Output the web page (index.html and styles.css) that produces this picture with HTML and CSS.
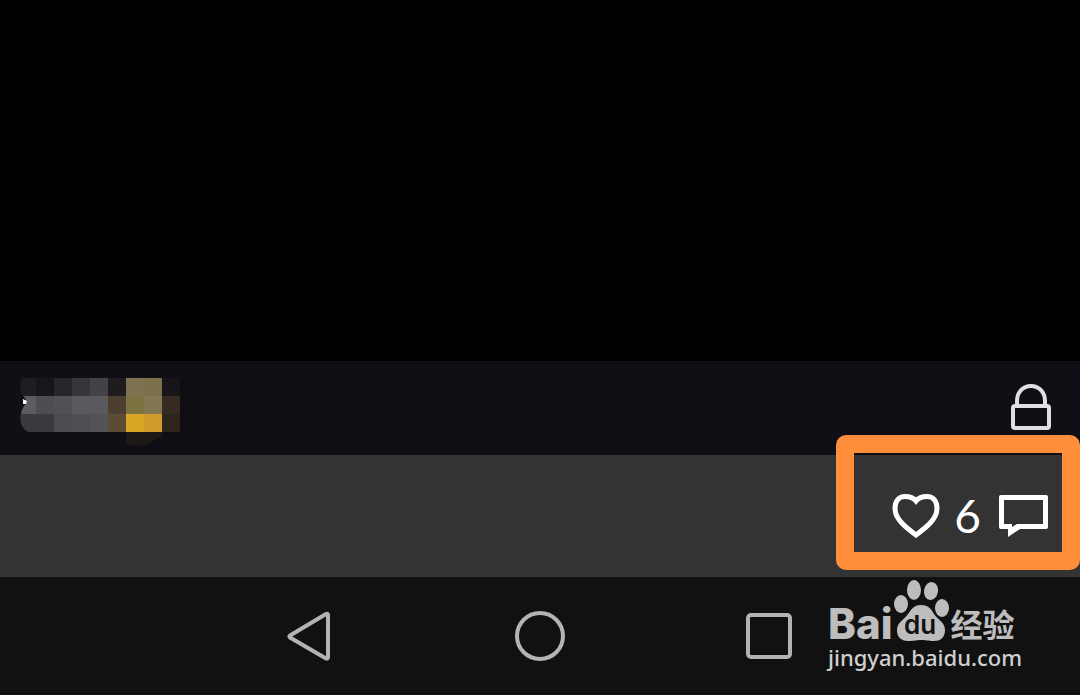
FILE: index.html
```
<!DOCTYPE html>
<html lang="zh-CN">
<head>
    <meta charset="UTF-8">
    <meta name="viewport" content="width=device-width, initial-scale=1.0">
    <title>百度经验</title>
    <link rel="stylesheet" href="styles.css">
</head>
<body>
    <main class="photo"></main>

    <div class="owner-bar">
        <!-- Pixelated user name -->
        <svg class="mosaic" width="256" height="76" viewBox="0 0 256 76" aria-hidden="true">
            <defs>
                <clipPath id="brush">
                    <path d="M3 8H256V62H8C-2 56 -2 44 6 33C7 31 6 29 4 27C-1 22-1 12 3 8Z"/>
                </clipPath>
            </defs>
            <path d="M160 12C190 5 245 5 254 16C258 26 252 35 238 38C236 52 236 65 214 68L160 66Z" fill="#0f0e13"/>
            <path d="M106 62H142V68H136C129 76 117 78 106 73Z" fill="#1f1915"/>
            <g clip-path="url(#brush)" shape-rendering="crispEdges">
                <path d="M0 8h16v18H0z" fill="#1e1d22"/>
                <path d="M16 8h18v18H16z" fill="#17161a"/>
                <path d="M34 8h18v18H34z" fill="#27262b"/>
                <path d="M52 8h18v18H52z" fill="#363539"/>
                <path d="M70 8h18v18H70z" fill="#434247"/>
                <path d="M88 8h18v18H88z" fill="#201b1e"/>
                <path d="M106 8h18v18h-18z" fill="#807251"/>
                <path d="M124 8h18v18h-18z" fill="#7c704b"/>
                <path d="M142 8h18v18h-18z" fill="#18151a"/>
                <path d="M0 26h16v18H0z" fill="#5d5c60"/>
                <path d="M16 26h18v18H16z" fill="#4e4d52"/>
                <path d="M34 26h18v18H34z" fill="#515055"/>
                <path d="M52 26h36v18H52z" fill="#5a595d"/>
                <path d="M88 26h18v18H88z" fill="#4c3f2f"/>
                <path d="M106 26h18v18h-18z" fill="#7b7141"/>
                <path d="M124 26h18v18h-18z" fill="#837653"/>
                <path d="M142 26h18v18h-18z" fill="#362b21"/>
                <path d="M0 44h34v18H0z" fill="#3a393d"/>
                <path d="M34 44h18v18H34z" fill="#4c4b50"/>
                <path d="M52 44h18v18H52z" fill="#4f4e53"/>
                <path d="M70 44h18v18H70z" fill="#535257"/>
                <path d="M88 44h18v18H88z" fill="#5c4c36"/>
                <path d="M106 44h18v18h-18z" fill="#dba526"/>
                <path d="M124 44h18v18h-18z" fill="#cf9b2b"/>
                <path d="M142 44h18v18h-18z" fill="#2e241b"/>
            </g>
            <path d="M3 29l4 2-1 3H3z" fill="#fff"/>
        </svg>
        <button class="icon-button" aria-label="隐私设置">
            <svg width="40" height="48" viewBox="0 0 40 48" fill="none" stroke="#e0e0e2" stroke-width="4">
                <path d="M6 21V17C6 8 12 2 20 2S34 8 34 17V21"/>
                <rect x="2" y="22" width="36" height="22" rx="2"/>
            </svg>
        </button>
    </div>

    <div class="action-bar">
        <button class="icon-button like" aria-label="赞 6">
            <svg width="48" height="46" viewBox="0 0 48 46" fill="none" stroke="#fff" stroke-width="5">
                <path d="M24 42C16 36 3 27 3 15.500C3 8 7 3.500 13 3.500C18 3.500 22 5.500 24 8C26 5.500 30 3.500 35 3.500C41 3.500 45 8 45 15.500C45 27 32 36 24 42Z"/>
            </svg>
            <span class="count">6</span>
        </button>
        <button class="icon-button" aria-label="评论">
            <svg width="50" height="44" viewBox="0 0 50 44">
                <path fill="#fff" fill-rule="evenodd" d="M2 1H47Q49 1 49 3V33Q49 35 47 35H21L9 43V35H2Q0 35 0 33V3Q0 1 2 1ZM5 6V30H13V33L18 30H44V6Z"/>
            </svg>
        </button>
        <div class="highlight"></div>
    </div>

    <nav class="nav-bar">
        <button class="icon-button" aria-label="返回">
            <svg width="50" height="50" viewBox="0 0 50 50" fill="none" stroke="#b3b3b3" stroke-width="4" stroke-linejoin="round">
                <path d="M5 24.500Q4 25.500 5 26.500L41 47.500Q43 48 43 46V4Q43 2 41 3Z"/>
            </svg>
        </button>
        <button class="icon-button" aria-label="主屏幕">
            <svg width="50" height="50" viewBox="0 0 50 50" fill="none" stroke="#b3b3b3" stroke-width="4">
                <circle cx="25" cy="25" r="23"/>
            </svg>
        </button>
        <button class="icon-button" aria-label="最近任务">
            <svg width="50" height="50" viewBox="0 0 50 50" fill="none" stroke="#b3b3b3" stroke-width="4">
                <rect x="3" y="4" width="42" height="42" rx="3"/>
            </svg>
        </button>

        <div class="watermark">
            <div class="logo">
                <span class="bai">Bai</span>
                <svg class="paw" width="58" height="62" viewBox="0 0 58 62" fill="#bdbdbd">
                    <ellipse cx="8" cy="24" rx="7" ry="9"/>
                    <ellipse cx="21" cy="10" rx="7" ry="10"/>
                    <ellipse cx="38" cy="11" rx="7" ry="9" transform="rotate(10 38 11)"/>
                    <ellipse cx="49" cy="28" rx="7" ry="9"/>
                    <path d="M28 25C34 25 38 28 41 34C44 39 52 42 52 50C52 58 47 61 41 61C35 61 32 60 28 60C24 60 21 61 15 61C8 61 4 57 4 50C4 42 12 39 15 34C19 28 22 25 28 25Z"/>
                    <text class="du" x="11" y="54">du</text>
                </svg>
                <span class="jingyan">经验</span>
            </div>
            <div class="site">jingyan.baidu.com</div>
        </div>
    </nav>
</body>
</html>
```
FILE: styles.css
```
* {
    box-sizing: border-box;
}
body {
    display: flex;
    flex-direction: column;
    min-height: 100vh;
    margin: 0;
    background-color: #000;
    color: #fff;
    font-family: Inter, "Noto Sans CJK SC", sans-serif;
}
.photo {
    flex: 1;
}
.icon-button {
    display: flex;
    align-items: center;
    padding: 0;
    border: none;
    background: none;
    color: inherit;
    cursor: pointer;
}
.icon-button svg {
    display: block;
}
.owner-bar {
    display: flex;
    align-items: center;
    justify-content: space-between;
    padding: 9px 29px 9px 20px;
    background-color: #100f15;
}
.action-bar {
    position: relative;
    display: flex;
    align-items: center;
    justify-content: flex-end;
    gap: 18px;
    height: 122px;
    padding-right: 31px;
    background-color: #333;
}
.like {
    gap: 14px;
}
.count {
    font-family: Lato, sans-serif;
    font-size: 46px;
    line-height: 46px;
}
/* Orange frame around the like and comment buttons */
.highlight {
    position: absolute;
    top: -20px;
    right: 0;
    width: 244px;
    height: 135px;
    border: 18px solid #ff8e3b;
    border-radius: 10px;
    pointer-events: none;
}
.nav-bar {
    position: relative;
    display: flex;
    align-items: center;
    justify-content: center;
    gap: 180px;
    height: 118px;
    background-color: #111;
}
.watermark {
    position: absolute;
    top: 3px;
    right: 58px;
    color: #bdbdbd;
}
.logo {
    display: flex;
    align-items: flex-end;
    height: 62px;
}
.bai {
    font-size: 42px;
    font-weight: 800;
    line-height: 36px;
}
.du {
    fill: #111;
    font-size: 26px;
    font-weight: 600;
}
.jingyan {
    font-family: "Noto Sans CJK SC", sans-serif;
    font-size: 32px;
    font-weight: 700;
    line-height: 38px;
}
.site {
    color: #d0d0d0;
    font-family: "Noto Sans", sans-serif;
    font-size: 22px;
    font-weight: 500;
    line-height: 30px;
}
```
